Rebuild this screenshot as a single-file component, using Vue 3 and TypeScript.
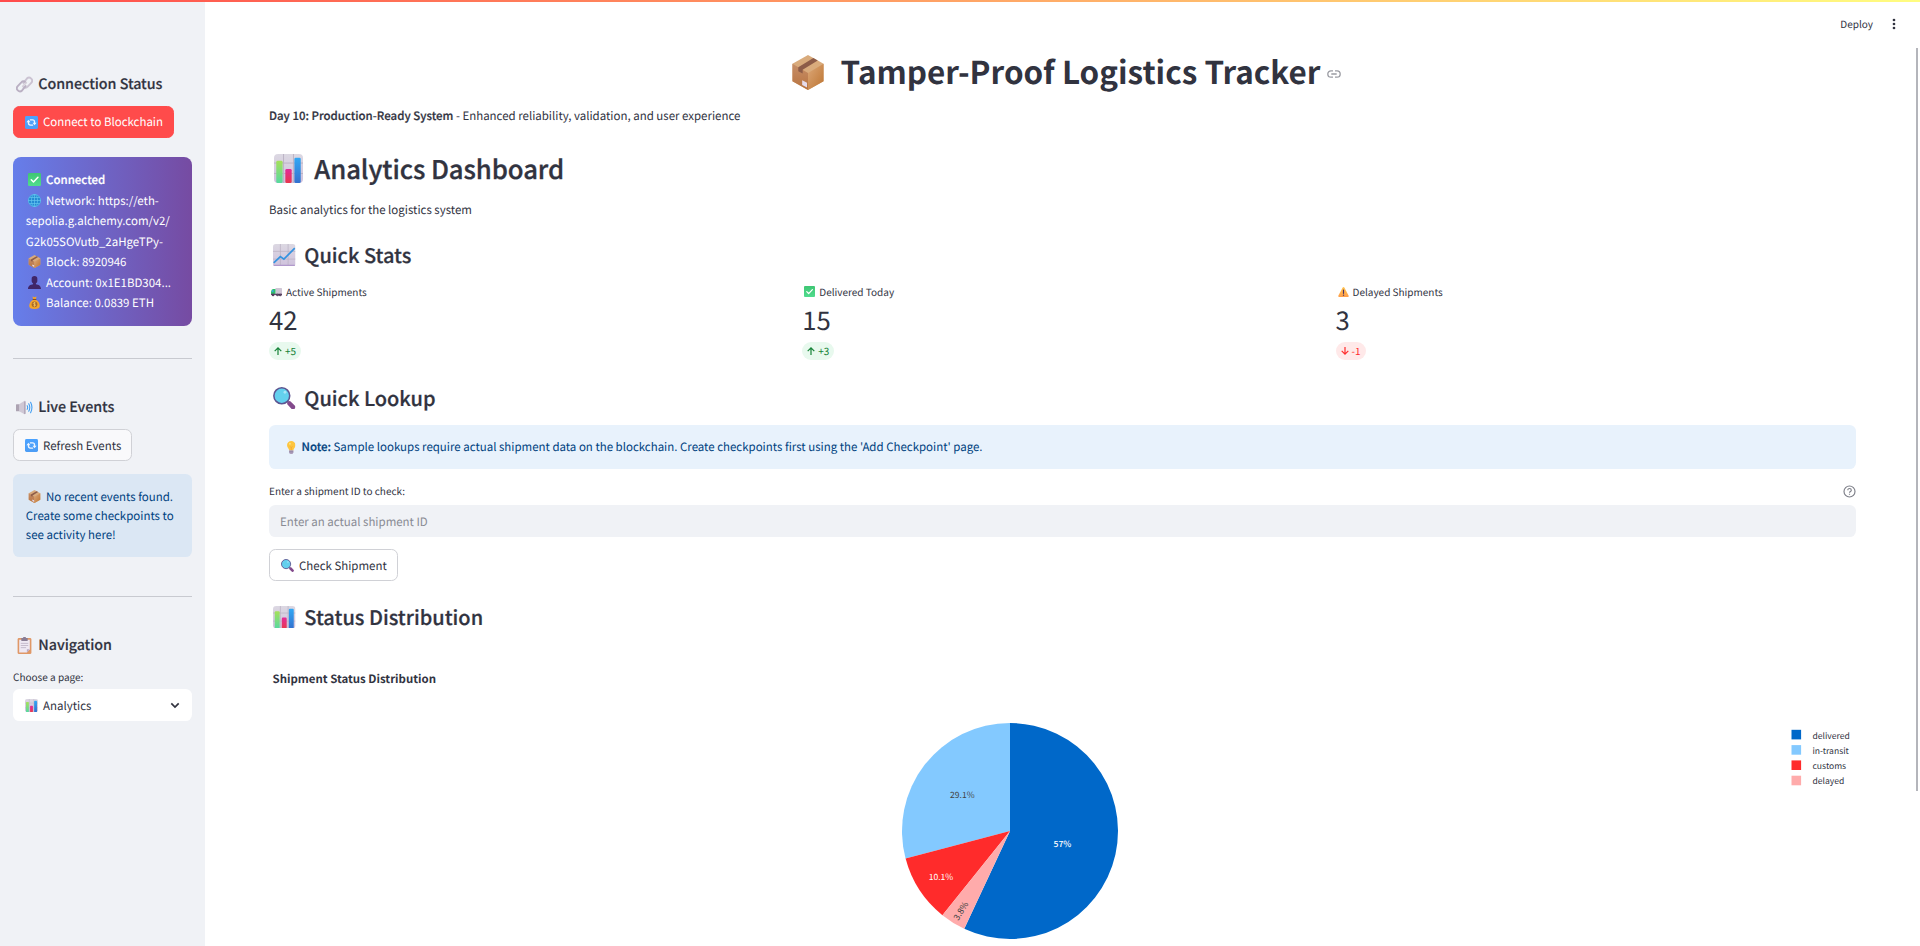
<script setup lang="ts">
interface Metric { icon: string; label: string; value: string; delta: string; up: boolean }
interface Slice { name: string; value: number; color: string; label: string; lx: number; ly: number; ink: string; rotate: number }

const metrics: Metric[] = [
  { icon: 'truck', label: 'Active Shipments', value: '42', delta: '+5', up: true },
  { icon: 'check', label: 'Delivered Today', value: '15', delta: '+3', up: true },
  { icon: 'warning', label: 'Delayed Shipments', value: '3', delta: '-1', up: false },
]

const slices: Slice[] = [
  { name: 'delivered', value: 45, color: '#0068c9', label: '57%', lx: 793.5, ly: 217.5, ink: '#fff', rotate: 0 },
  { name: 'in-transit', value: 23, color: '#83c9ff', label: '29.1%', lx: 693.3, ly: 168.5, ink: '#444', rotate: 0 },
  { name: 'customs', value: 8, color: '#ff2b2b', label: '10.1%', lx: 672, ly: 250.5, ink: '#fff', rotate: 0 },
  { name: 'delayed', value: 3, color: '#ffabab', label: '3.8%', lx: 694.5, ly: 283.5, ink: '#444', rotate: -58 },
]

const cx = 741
const cy = 202
const radius = 108
const total = slices.reduce((sum, s) => sum + s.value, 0)

// The largest slice runs clockwise from the top, the others counter-clockwise from it.
function point(turn: number): string {
  const a = turn * 2 * Math.PI
  return `${(cx + radius * Math.sin(a)).toFixed(2)} ${(cy - radius * Math.cos(a)).toFixed(2)}`
}
let cursor = 1
const wedges = slices.map((s, i) => {
  const share = s.value / total
  const from = i === 0 ? 0 : cursor - share
  const to = i === 0 ? share : cursor
  if (i > 0) cursor = from
  return { ...s, d: `M${cx} ${cy}L${point(from)}A${radius} ${radius} 0 ${share > 0.5 ? 1 : 0} 1 ${point(to)}Z` }
})
</script>

<template>
  <div class="app">
    <svg class="defs" aria-hidden="true">
      <defs>
        <linearGradient id="g-green" x1="0" y1="0" x2="0" y2="1"><stop offset="0" stop-color="#a6e05a" /><stop offset="1" stop-color="#56d9a0" /></linearGradient>
        <linearGradient id="g-pink" x1="0" y1="0" x2="0" y2="1"><stop offset="0" stop-color="#e22b9a" /><stop offset="1" stop-color="#e8374d" /></linearGradient>
        <linearGradient id="g-blue" x1="0" y1="0" x2="0" y2="1"><stop offset="0" stop-color="#31a8f5" /><stop offset="1" stop-color="#3371cf" /></linearGradient>
        <linearGradient id="g-paper" x1="0" y1="0" x2="0" y2="1"><stop offset="0" stop-color="#dcd8e2" /><stop offset="1" stop-color="#cfc2dd" /></linearGradient>
        <linearGradient id="g-boxl" x1="0" y1="0" x2="0" y2="1"><stop offset="0" stop-color="#c68e68" /><stop offset="1" stop-color="#b8733f" /></linearGradient>
        <linearGradient id="g-boxr" x1="0" y1="0" x2="1" y2="1"><stop offset="0" stop-color="#dca879" /><stop offset="1" stop-color="#bd7431" /></linearGradient>
        <linearGradient id="g-check" x1="0" y1="0" x2="0" y2="1"><stop offset="0" stop-color="#3fc673" /><stop offset="1" stop-color="#50dc8e" /></linearGradient>
        <linearGradient id="g-sky" x1="0" y1="0" x2="0" y2="1"><stop offset="0" stop-color="#4ba2ff" /><stop offset="1" stop-color="#4d9df5" /></linearGradient>
        <linearGradient id="g-warn" x1="0" y1="0" x2="0" y2="1"><stop offset="0" stop-color="#ffc34e" /><stop offset="1" stop-color="#ff9f4a" /></linearGradient>
      </defs>
      <symbol id="e-box" viewBox="0 0 32 36">
        <path d="M16 0 32 9V27L16 36 0 27V9Z" fill="#d9ab7c" />
        <path d="M0 9 16 18.500V36L0 27Z" fill="url(#g-boxl)" />
        <path d="M16 18.500 32 9V27L16 36Z" fill="url(#g-boxr)" />
        <path d="M6 12.500 21.500 3.200 26 5.700 10.500 15.200V19L6 16.600Z" fill="#8d5c48" />
        <path d="M10 26l5 2.600V33.500L10 30.800Z" fill="#e6dcec" />
      </symbol>
      <symbol id="e-bars" viewBox="0 0 32 32">
        <rect width="32" height="32" rx="4.500" fill="url(#g-paper)" />
        <path d="M10.500 0V32M21.500 0V32M0 10H32M0 21.500H32" stroke="#b9b1c2" stroke-width="1" />
        <rect x="2.500" y="7.500" width="7" height="24.500" rx="1.500" fill="url(#g-green)" />
        <rect x="12.500" y="16.500" width="7" height="15.500" rx="1.500" fill="url(#g-pink)" />
        <rect x="22.500" y="4" width="7" height="28" rx="1.500" fill="url(#g-blue)" />
      </symbol>
      <symbol id="e-trend" viewBox="0 0 32 32">
        <rect width="32" height="32" rx="4" fill="url(#g-paper)" />
        <path d="M10.500 0V32M21.500 0V32M0 10.500H32M0 21.500H32" stroke="#b9b1c2" stroke-width="1" />
        <path d="M1 30.500H31" stroke="#b199cc" stroke-width="2" />
        <path d="M1 27 10.500 18 15.500 21.500 31 6" fill="none" stroke="#3493e0" stroke-width="2.400" />
      </symbol>
      <symbol id="e-link" viewBox="0 0 32 32">
        <g fill="none" stroke-width="3.600" stroke-linecap="round">
          <path d="M14 13 20.500 4.800a5.800 5.800 0 0 1 8.200 8.200L22 20a5.400 5.400 0 0 1-7.500.500" stroke="#cbc3d2" />
          <path d="M18 19 11.500 27.200a5.800 5.800 0 0 1-8.200-8.200L10 12a5.400 5.400 0 0 1 7.500-.500" stroke="#bab0c3" />
          <path d="M12.500 19.500 19.500 12.500" stroke="#d6d0da" stroke-width="2.800" />
        </g>
      </symbol>
      <symbol id="e-sync" viewBox="0 0 32 32">
        <rect width="32" height="32" rx="3.500" fill="url(#g-sky)" />
        <g fill="none" stroke="#eef5ff" stroke-width="3.200">
          <path d="M12 9.500H18.500Q23.500 9.500 23.500 14.500V18.500" /><path d="M20 22.500H13.500Q8.500 22.500 8.500 17.500V13.500" />
        </g>
        <path d="M18.500 16.500H28.500L23.500 22.500ZM3.500 15.500H13.500L8.500 9.500Z" fill="#eef5ff" />
      </symbol>
      <symbol id="e-check" viewBox="0 0 32 32">
        <rect width="32" height="32" rx="3" fill="url(#g-check)" />
        <path d="M8 16.500 13.500 22 24.500 10.500" fill="none" stroke="#fff" stroke-width="3.600" stroke-linecap="round" stroke-linejoin="round" />
      </symbol>
      <symbol id="e-globe" viewBox="0 0 32 32">
        <circle cx="16" cy="16" r="15.500" fill="#2489d3" />
        <g fill="none" stroke="#66c8ef" stroke-width="1.700"><circle cx="16" cy="16" r="15" /><ellipse cx="16" cy="16" rx="7.500" ry="15" /><path d="M16 0V32M0 16H32M3.500 8.500H28.500M3.500 23.500H28.500" /></g>
      </symbol>
      <symbol id="e-person" viewBox="0 0 32 32">
        <path d="M9 7a7 7 0 0 1 14 0v5c0 3-2 5-3.500 6v2C26 21 32 24 32 32H0C0 24 6 21 12.500 20v-2C11 17 9 15 9 12Z" fill="#402668" />
      </symbol>
      <symbol id="e-money" viewBox="0 0 28 32">
        <path d="M9 1.500 14 3l5-1.500-2 7.500C23 12 27 18 27 24c0 6-4 8-13 8S1 30 1 24C1 18 5 12 11 9Z" fill="#f3a42b" />
        <path d="M9.500 8.500H18.500" stroke="#7b4a2a" stroke-width="2.500" />
        <circle cx="14" cy="20.500" r="7" fill="#a76828" />
        <path d="M17 17.500c-1-1.500-6-1.500-6 1s6 1.500 6 4-5 2.500-6 1M14 15V26" fill="none" stroke="#ffd36b" stroke-width="1.600" />
      </symbol>
      <symbol id="e-speaker" viewBox="0 0 32 26">
        <path d="M0 8Q0 7 1 7H7V20H1Q0 20 0 19Z" fill="#aca3b2" />
        <path d="M6 7 16 .500Q18.500 0 18.500 3V23Q18.500 26 16 25.500L6 20Z" fill="#cfc8d5" />
        <path d="M16.500 1.500V25" stroke="#aaa0b3" stroke-width="2" />
        <path d="M21 9.500q2 3.500 0 7M24 6q4 7 0 14M27.500 3q5 10 0 20" fill="none" stroke="#3d9cf2" stroke-width="2" stroke-linecap="round" />
      </symbol>
      <symbol id="e-clip" viewBox="0 0 26 32">
        <rect y="2" width="26" height="30" rx="2.500" fill="#e09867" />
        <path d="M3 5H23V23L17.500 29H3Z" fill="#eee8f3" /><path d="M23 23 17.500 29V23Z" fill="#b9aac4" />
        <rect x="7" y="2" width="12" height="5.500" rx="1" fill="#897d94" /><rect x="10" width="6" height="4" rx="2" fill="#897d94" />
        <path d="M6 12H20M6 16H20M6 20H16" stroke="#beb3c6" stroke-width="1.600" />
      </symbol>
      <symbol id="e-truck" viewBox="0 0 32 26">
        <rect x="13" y="1" width="19" height="19" rx="2" fill="#cfc6d5" />
        <path d="M0 12Q1 4 6 4H13V22H0Z" fill="#2fbc6c" /><path d="M2.500 11Q3 6.500 7 6.500V13H2.500Z" fill="#35a5e8" />
        <path d="M0 18H32V22H0Z" fill="#67496f" />
        <g fill="#46304f"><circle cx="6" cy="22" r="3.700" /><circle cx="19" cy="22" r="3.700" /><circle cx="27" cy="22" r="3.700" /></g>
        <g fill="#a798ae"><circle cx="6" cy="22" r="1.400" /><circle cx="19" cy="22" r="1.400" /><circle cx="27" cy="22" r="1.400" /></g>
      </symbol>
      <symbol id="e-warning" viewBox="0 0 32 30">
        <path d="M13.500 1.500Q16-1.500 18.500 1.500L31.500 26Q32.500 30 29 30H3Q-.500 30 .500 26Z" fill="url(#g-warn)" />
        <path d="M16 9V19" stroke="#4a2f62" stroke-width="3.400" stroke-linecap="round" /><circle cx="16" cy="24.500" r="2.100" fill="#4a2f62" />
      </symbol>
      <symbol id="e-lens" viewBox="0 0 32 32">
        <path d="M20 20 24 24" stroke="#8a7a9a" stroke-width="3" />
        <path d="M23.500 23.500 28.500 28.600" stroke="#834a8c" stroke-width="6.500" stroke-linecap="round" />
        <circle cx="12.500" cy="12.500" r="11.300" fill="#63d0ee" stroke="#5c5591" stroke-width="2.200" />
        <circle cx="17" cy="7.500" r="2" fill="#a8e6f8" />
      </symbol>
      <symbol id="e-bulb" viewBox="0 0 22 34">
        <path d="M11 0A11 11 0 0 1 22 11c0 6-5 8-5.500 14h-11C5 19 0 17 0 11A11 11 0 0 1 11 0Z" fill="#fdc53f" />
        <path d="M8 14 11 17l3-3M11 17V25" fill="none" stroke="#ef9330" stroke-width="1.500" /><circle cx="7.500" cy="7" r="2.500" fill="#ffe37d" />
        <path d="M5.500 24h11v6q0 4-5.500 4t-5.500-4Z" fill="#a99bb8" /><path d="M5.500 28h11" stroke="#86789a" stroke-width="1.500" />
      </symbol>
    </svg>

    <div class="stripe"></div>

    <aside class="sidebar">
      <h3 class="side-title"><svg class="i17"><use href="#e-link" /></svg><span>Connection Status</span></h3>
      <button class="btn primary"><svg class="i13"><use href="#e-sync" /></svg><span>Connect to Blockchain</span></button>
      <div class="card">
        <svg class="inl"><use href="#e-check" /></svg><b>Connected</b><br>
        <svg class="inl"><use href="#e-globe" /></svg>Network: https://eth-<br>sepolia.g.alchemy.com/v2/<br>G2k05SOVutb_2aHgeTPy-<br>
        <svg class="inl"><use href="#e-box" /></svg>Block: 8920946<br>
        <svg class="inl"><use href="#e-person" /></svg>Account: 0x1E1BD304...<br>
        <svg class="inl"><use href="#e-money" /></svg>Balance: 0.0839 ETH
      </div>
      <hr class="rule first">
      <h3 class="side-title after-rule"><svg class="i17"><use href="#e-speaker" /></svg><span>Live Events</span></h3>
      <button class="btn side"><svg class="i13"><use href="#e-sync" /></svg><span>Refresh Events</span></button>
      <div class="events"><svg class="inl"><use href="#e-box" /></svg>No recent events found. Create some checkpoints to see activity here!</div>
      <hr class="rule second">
      <h3 class="side-title after-rule"><svg class="i17"><use href="#e-clip" /></svg><span>Navigation</span></h3>
      <label class="label nav-label">Choose a page:</label>
      <div class="select">
        <svg class="i13"><use href="#e-bars" /></svg><span>Analytics</span>
        <svg class="chev" viewBox="0 0 10 7"><path d="M1.300 1.300 5 5 8.700 1.300" fill="none" stroke="#31333f" stroke-width="1.700" /></svg>
      </div>
    </aside>

    <header class="toolbar">
      <span>Deploy</span>
      <svg class="dots" viewBox="0 0 4 14"><circle cx="2" cy="3" r="1.350" /><circle cx="2" cy="7" r="1.350" /><circle cx="2" cy="11" r="1.350" /></svg>
    </header>
    <div class="scrollbar"></div>

    <main class="main">
      <h1 class="title">
        <svg class="box"><use href="#e-box" /></svg><span>Tamper-Proof Logistics Tracker</span>
        <svg class="anchor" viewBox="0 0 14 8" fill="none" stroke="#9b9ca3" stroke-width="1.300"><path d="M6 .800H4a3.200 3.200 0 0 0 0 6.400H6M8 .800h2a3.200 3.200 0 0 1 0 6.400H8M4.300 4H9.700" /></svg>
      </h1>
      <p class="text intro"><b>Day 10: Production-Ready System</b> - Enhanced reliability, validation, and user experience</p>
      <h2 class="dash"><svg><use href="#e-bars" /></svg><span>Analytics Dashboard</span></h2>
      <p class="text basic">Basic analytics for the logistics system</p>

      <h3 class="section stats"><svg><use href="#e-trend" /></svg><span>Quick Stats</span></h3>
      <div class="metrics">
        <div v-for="m in metrics" :key="m.label" class="metric">
          <div class="label mlabel"><svg :class="m.icon"><use :href="`#e-${m.icon}`" /></svg><span>{{ m.label }}</span></div>
          <div class="value">{{ m.value }}</div>
          <div class="delta" :class="{ down: !m.up }">
            <svg viewBox="0 0 8 8" fill="none" stroke="currentColor" stroke-width="1.200">
              <path v-if="m.up" d="M4 8V.900M.700 4.200 4 .900 7.300 4.200" /><path v-else d="M4 0V7.100M.700 3.800 4 7.100 7.300 3.800" />
            </svg><span>{{ m.delta }}</span>
          </div>
        </div>
      </div>

      <h3 class="section lookup"><svg><use href="#e-lens" /></svg><span>Quick Lookup</span></h3>
      <div class="note"><svg><use href="#e-bulb" /></svg><span><b>Note:</b> Sample lookups require actual shipment data on the blockchain. Create checkpoints first using the 'Add Checkpoint' page.</span></div>
      <div class="label field-label">
        <span>Enter a shipment ID to check:</span>
        <svg viewBox="0 0 13 13" fill="none" stroke="#7d7f88" stroke-width="1.150"><circle cx="6.500" cy="6.500" r="5.500" /><path d="M4.800 5.200c0-2.300 3.500-2.200 3.500 0 0 1.300-1.800 1.300-1.800 2.600M6.500 8.700V9.800" /></svg>
      </div>
      <input class="input" type="text" placeholder="Enter an actual shipment ID">
      <button class="btn check"><svg class="i13"><use href="#e-lens" /></svg><span>Check Shipment</span></button>

      <h3 class="section status"><svg><use href="#e-bars" /></svg><span>Status Distribution</span></h3>
      <svg class="chart" viewBox="0 0 1587 317">
        <text class="chart-title" x="3.500" y="54.300">Shipment Status Distribution</text>
        <path v-for="w in wedges" :key="w.name" :d="w.d" :fill="w.color" />
        <text v-for="w in wedges" :key="w.label" class="slice-label" :class="{ strong: w.value > 40 }" :fill="w.ink" :transform="`translate(${w.lx} ${w.ly}) rotate(${w.rotate})`">{{ w.label }}</text>
        <g v-for="(w, i) in slices" :key="w.color">
          <rect x="1522.500" :y="100.800 + i * 15.300" width="9.600" height="9.600" :fill="w.color" />
          <text class="legend" x="1543.500" :y="109.500 + i * 15.300">{{ w.name }}</text>
        </g>
      </svg>
    </main>
  </div>
</template>

<style>
body { margin: 0; background: #fff; }
</style>

<style scoped>
.app { position: relative; display: flex; height: 946px; overflow: hidden; background: #fff; color: #31333f; font: 11.48px/20px "Noto Sans CJK SC", "Noto Sans", sans-serif; text-rendering: geometricPrecision; }
.defs { position: absolute; width: 0; height: 0; }
.app svg { flex: none; }
b { font-weight: 500; -webkit-text-stroke: 0.2px currentColor; }
h1, h2, h3, p { margin: 0; }
h2, h3 { font-weight: 500; letter-spacing: -0.003em; -webkit-text-stroke: 0.012em currentColor; }
.stripe { position: absolute; inset: 0 0 auto; z-index: 3; height: 2px; background: linear-gradient(90deg, #ff4b4b, #fffd80); }
.scrollbar { position: absolute; top: 48px; left: 1916px; width: 2px; height: 743px; background: #b4b5bb; }

.sidebar { box-sizing: border-box; flex: none; width: 205px; padding: 74px 13px 0; background: #f0f2f6; display: flex; flex-direction: column; align-items: flex-start; }
.side-title { display: flex; align-items: center; height: 20px; padding-left: 3px; font-size: 14.29px; line-height: 20px; }
.side-title span { margin-left: 5.300px; }
.i17 { width: 17px; height: 17px; }
.i13 { width: 13px; height: 13px; }
.btn { box-sizing: border-box; display: flex; align-items: center; height: 32px; margin: 0; padding: 0 10px 0 11px; border: 1px solid #d0d1d6; border-radius: 6.400px; background: #fff; color: #31333f; font: inherit; text-rendering: inherit; white-space: nowrap; }
.btn span { margin-left: 5px; }
.primary { width: 161px; margin-top: 12px; background: #ff4b4b; border-color: #ff4b4b; color: #fff; }
.side { width: 119px; margin-top: 12px; padding-top: 1px; background: #f9f9fb; }
.card { box-sizing: border-box; width: 179px; height: 169px; margin-top: 19px; padding: 13.100px 12.800px 0; border-radius: 8px; background: linear-gradient(90deg, #667eea 0%, #764ba2 100%); color: #fff; line-height: 20.480px; white-space: nowrap; }
.inl { width: 13px; height: 13px; margin: 0 4.700px 0 2.600px; vertical-align: -2.200px; }
.rule { width: 100%; height: 1px; margin: 32px 0 0; border: 0; background: #c8cad0; }
.rule.second { margin-top: 39px; }
.after-rule { margin-top: 38px; }
.events { box-sizing: border-box; width: 179px; height: 83px; margin-top: 13px; padding: 14px 12px 0 12.800px; border-radius: 6.400px; background: #dbe7f4; color: #004280; line-height: 19.200px; }
.label { font-size: 10px; line-height: 18px; }
.nav-label { margin-top: 13px; }
.select { box-sizing: border-box; display: flex; align-items: center; width: 179px; height: 32px; margin-top: 3px; padding: 1px 12.500px 0 12px; border-radius: 6.400px; background: #fff; }
.select span { margin-left: 5px; }
.chev { width: 10px; height: 7px; margin-left: auto; }

.toolbar { position: absolute; top: 14px; right: 24px; display: flex; align-items: center; height: 20px; font-size: 10px; }
.dots { width: 4px; height: 14px; margin-left: 19px; fill: #31333f; }

.main { flex: 1; min-width: 0; padding: 51px 64px 0; }
.title { display: flex; align-items: center; justify-content: center; height: 42px; padding-left: 8px; font-size: 31.430px; font-weight: 700; line-height: 42px; white-space: nowrap; }
.title .box { width: 32px; height: 35px; margin: 0 17px 0 0; }
.title .anchor { width: 14px; height: 8px; margin: 4px 0 0 7px; }
.intro { margin-top: 13px; }
.dash { display: flex; align-items: center; height: 34px; margin-top: 26px; padding-left: 5px; font-size: 25.710px; line-height: 34px; }
.dash svg { width: 29px; height: 29px; margin: -2px 11.300px 0 0; }
.basic { margin-top: 14px; }
.section { display: flex; align-items: center; height: 26px; padding-left: 4px; font-size: 20px; line-height: 26px; letter-spacing: 0; }
.section svg { width: 22.500px; height: 22.500px; margin-right: 8.800px; }
.stats { margin-top: 22px; }
.metrics { display: grid; grid-template-columns: repeat(3, 1fr); gap: 12.800px; margin-top: 14.500px; }
.mlabel { display: flex; align-items: center; height: 18px; padding-left: 2px; }
.mlabel svg { width: 11px; height: 10px; margin-right: 4px; }
.mlabel .check { height: 11px; }
.value { height: 34px; margin-top: 2px; font-size: 25.710px; line-height: 34px; }
.delta { display: inline-flex; align-items: center; height: 18px; margin-top: 5.500px; padding: 0 5px; border-radius: 9px; background: #e8f9ee; color: #158237; font-size: 10px; line-height: 18px; vertical-align: top; }
.delta svg { width: 8px; height: 8px; margin-right: 3px; }
.delta.down { background: #ffe9e9; color: #ff2b2b; }
.lookup { margin-top: 25px; }
.note { box-sizing: border-box; display: flex; align-items: center; height: 44px; margin-top: 14px; padding: 0 17px 0 18px; border-radius: 6.400px; background: #e8f2fc; color: #004280; }
.note svg { width: 8.500px; height: 13px; margin-right: 6px; }
.field-label { display: flex; align-items: center; justify-content: space-between; margin-top: 13px; }
.field-label svg { width: 13px; height: 13px; }
.input { box-sizing: border-box; display: block; width: 100%; height: 32px; margin: 5px 0 0; padding: 1px 11px 0; border: 0; border-radius: 6.400px; background: #f0f2f6; font: inherit; text-rendering: inherit; }
.input::placeholder { color: #898b94; opacity: 1; }
.btn.check { width: 129px; margin-top: 12px; padding-top: 1px; }
.status { margin-top: 23px; }
.chart { display: block; width: 1587px; height: 317px; margin-top: -1px; }
.chart-title { font-size: 11.430px; font-weight: 700; fill: #31333f; }
.slice-label { font-size: 8.570px; text-anchor: middle; }
.strong { font-weight: 500; }
.legend { font-size: 8.570px; fill: #31333f; }
</style>
